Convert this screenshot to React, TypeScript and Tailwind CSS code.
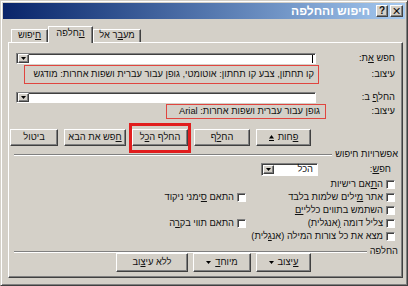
import type { ReactNode } from 'react'

const raised =
  'border border-t-white border-l-white border-r-[#404040] border-b-[#404040] shadow-[inset_-1px_-1px_0_#808080] bg-[#d4d0c8]'
const sunken =
  'border border-t-[#808080] border-l-[#808080] border-r-white border-b-white shadow-[inset_1px_1px_0_#404040] bg-white'

function U({ children }: { children: ReactNode }) {
  return <span className="underline underline-offset-1">{children}</span>
}

function DropArrow() {
  return (
    <span className={`${raised} ml-[1px] mr-auto flex h-[9px] w-[11px] shrink-0 items-center justify-center`}>
      <svg width="5" height="3" viewBox="0 0 5 3">
        <path d="M0 0h5L2.5 3z" fill="#000" />
      </svg>
    </span>
  )
}

function Combo({ width, children }: { width: string; children?: ReactNode }) {
  return (
    <div className={`${sunken} ${width} flex h-[11px] shrink-0 items-center`}>
      {children}
      <DropArrow />
    </div>
  )
}

function Button({ width, children, icon }: { width: string; children: ReactNode; icon?: ReactNode }) {
  return (
    <div className={`${raised} ${width} flex h-full shrink-0 items-center justify-center gap-[4px]`}>
      <span className="whitespace-nowrap">{children}</span>
      {icon}
    </div>
  )
}

function SmallTri() {
  return (
    <svg width="5" height="3" viewBox="0 0 5 3">
      <path d="M0 0h5L2.5 3z" fill="#000" />
    </svg>
  )
}

function Check({ label, width }: { label: ReactNode; width?: string }) {
  return (
    <div className={`flex items-center gap-[3px] ${width ?? ''}`}>
      <span className="h-[9px] w-[9px] shrink-0 border border-t-[#808080] border-l-[#808080] border-r-white border-b-white bg-white shadow-[inset_1px_1px_0_#404040]" />
      <span className="whitespace-nowrap">{label}</span>
    </div>
  )
}

function Section({ title }: { title: string }) {
  return (
    <div className="-mr-[3px] flex h-full items-center">
      <span className="whitespace-nowrap">{title}</span>
      <span className="mr-[3px] h-[2px] flex-1 border-t border-b border-t-[#808080] border-b-white" />
    </div>
  )
}

function Tab({ width, active, children }: { width: string; active?: boolean; children: ReactNode }) {
  return (
    <div
      dir="rtl"
      className={`${raised} ${width} flex items-center justify-center border-b-0 shadow-[inset_-1px_0_0_#808080] ${
        active ? 'relative z-10 -mb-[1px] h-[17px] pb-[2px]' : 'h-[13px]'
      }`}
    >
      <span className="whitespace-nowrap">{children}</span>
    </div>
  )
}

export default function App() {
  return (
    <div
      className="flex h-[286px] w-[408px] flex-col border border-t-[#d4d0c8] border-l-[#d4d0c8] border-r-[#404040] border-b-[#404040] bg-[#d4d0c8] p-[2px] text-[9.3px] leading-none text-[#111] shadow-[inset_1px_1px_0_white,inset_-1px_-1px_0_#808080]"
      style={{ fontFamily: '"Liberation Sans", "DejaVu Sans", sans-serif' }}
    >
      {/* title bar */}
      <div className="flex h-[16px] shrink-0 items-center justify-end gap-[2px] bg-linear-to-r from-[#0a246a] to-[#a6caf0] pr-[2px]">
        <span dir="rtl" className="mr-[4px] text-[12px] font-bold text-white">
          חיפוש והחלפה
        </span>
        <span className={`${raised} flex h-[12px] w-[12px] items-center justify-center text-[10px] font-bold`}>?</span>
        <span className={`${raised} flex h-[12px] w-[13px] items-center justify-center text-[11px] font-bold`}>✕</span>
      </div>

      <div className="flex flex-1 flex-col pb-[5px] pl-[5px] pr-[2px] pt-[6px]">
        {/* tabs */}
        <div className="flex h-[17px] shrink-0 items-end pl-[3px]">
          <Tab width="w-[37px]">
            <U>ח</U>יפוש
          </Tab>
          <Tab width="w-[45px]" active>
            <U>ה</U>חלפה
          </Tab>
          <Tab width="w-[48px]">
            מע<U>ב</U>ר אל
          </Tab>
        </div>

        {/* panel */}
        <div dir="rtl" className={`${raised} flex flex-1 flex-col pl-[5px] pr-[7px] pt-[10px]`}>
          <div className="flex h-[11px] items-center">
            <span className="w-[79px] shrink-0">
              חפש <U>א</U>ת:
            </span>
            <Combo width="w-[300px]">
              <span className="mr-[2px] h-[8px] w-px bg-black" />
            </Combo>
          </div>

          <div className="mt-[1px] flex h-[19px] items-center">
            <span className="w-[79px] shrink-0">עיצוב:</span>
            <div className="-mr-[3px] flex h-full w-[295px] items-center border border-[#e0453f] pr-[4px]">
              <span className="whitespace-nowrap">קו תחתון, צבע קו תחתון: אוטומטי, גופן עבור עברית ושפות אחרות: מודגש</span>
            </div>
          </div>

          <div className="mt-[8px] flex h-[11px] items-center">
            <span className="w-[79px] shrink-0">
              החל<U>ף</U> ב:
            </span>
            <Combo width="w-[300px]" />
          </div>

          <div className="mt-[1px] flex h-[15px] items-center">
            <span className="w-[79px] shrink-0">עיצוב:</span>
            <div className="-mr-[10px] flex h-full w-[160px] items-center border border-[#e0453f] pr-[5px]">
              <span className="whitespace-nowrap">גופן עבור עברית ושפות אחרות: Arial</span>
            </div>
          </div>

          <div className="mr-[84px] mt-[10px] flex h-[17px] gap-[6px]">
            <Button
              width="w-[55px]"
              icon={
                <svg width="5" height="6" viewBox="0 0 5 6">
                  <path d="M0 3.5h5L2.5 0z" fill="#000" />
                  <path d="M0 5.5h5" stroke="#000" />
                </svg>
              }
            >
              <U>פ</U>חות
            </Button>
            <Button width="w-[56px]">
              הח<U>ל</U>ף
            </Button>
            <div className="relative h-full">
              <Button width="w-[56px]">
                החלף ה<U>כ</U>ל
              </Button>
              <span className="pointer-events-none absolute -bottom-[7px] -left-[3px] -right-[3px] -top-[6px] border-[3px] border-[#e11d1d]" />
            </div>
            <Button width="w-[62px]">
              <U>ח</U>פש את הבא
            </Button>
            <Button width="w-[48px]">ביטול</Button>
          </div>

          <div className="mt-[3px] h-[12px]">
            <Section title="אפשרויות חיפוש" />
          </div>

          <div className="mt-[2px] flex h-[13px] items-center">
            <span className="w-[77px] shrink-0 pr-[4px]">
              חפ<U>ש</U>:
            </span>
            <div className={`${sunken} flex h-[13px] w-[57px] items-center pr-[4px]`}>
              <span>הכל</span>
              <DropArrow />
            </div>
          </div>

          <div className="mt-[2px] flex flex-col">
            <div className="flex h-[13px] items-center">
              <Check
                label={
                  <>
                    ה<U>ת</U>אם רישיות
                  </>
                }
              />
            </div>
            <div className="flex h-[13px] items-center">
              <Check
                width="w-[149px]"
                label={
                  <>
                    אתר <U>מ</U>ילים שלמות בלבד
                  </>
                }
              />
              <Check
                label={
                  <>
                    התאם <U>ס</U>ימני ניקוד
                  </>
                }
              />
            </div>
            <div className="flex h-[13px] items-center">
              <Check
                label={
                  <>
                    השתמש בתווים כללי<U>ים</U>
                  </>
                }
              />
            </div>
            <div className="flex h-[13px] items-center">
              <Check
                width="w-[149px]"
                label={
                  <>
                    צליל דומה <U>(</U>אנגלית)
                  </>
                }
              />
              <Check
                label={
                  <>
                    התאם תווי בק<U>ר</U>ה
                  </>
                }
              />
            </div>
            <div className="flex h-[13px] items-center">
              <Check
                label={
                  <>
                    מצא את כל צורות המילה (אנ<U>ג</U>לית)
                  </>
                }
              />
            </div>
          </div>

          <div className="mt-[4px] h-[10px]">
            <Section title="החלפה" />
          </div>

          <div className="-mt-[4px] mr-[84px] flex h-[19px] gap-[5px]">
            <Button width="w-[55px]" icon={<SmallTri />}>
              <U>ע</U>יצוב
            </Button>
            <Button width="w-[58px]" icon={<SmallTri />}>
              מיוח<U>ד</U>
            </Button>
            <Button width="w-[72px]">
              ללא עי<U>צ</U>וב
            </Button>
          </div>
        </div>
      </div>
    </div>
  )
}
